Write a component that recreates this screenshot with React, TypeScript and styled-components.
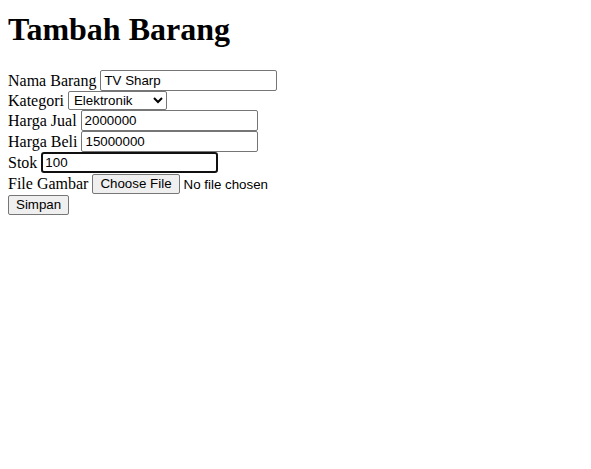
import { createGlobalStyle } from "styled-components";
import styled from "styled-components";

// ---------------------------------------------------------------------

export default function App() {
  return (
    <>
      <GlobalStyle />
      <Title>Tambah Barang</Title>
      <Form onSubmit={(e) => e.preventDefault()}>
        <Row>
          <Label htmlFor="nama">Nama Barang</Label>
          <TextInput id="nama" type="text" defaultValue="TV Sharp" />
        </Row>
        <Row $short>
          <Label htmlFor="kategori">Kategori</Label>
          <Select id="kategori" defaultValue="Elektronik">
            <option>Elektronik</option>
            <option>Pakaian</option>
            <option>Makanan</option>
          </Select>
        </Row>
        <Row>
          <Label htmlFor="jual">Harga Jual</Label>
          <TextInput id="jual" type="text" defaultValue="2000000" />
        </Row>
        <Row>
          <Label htmlFor="beli">Harga Beli</Label>
          <TextInput id="beli" type="text" defaultValue="15000000" />
        </Row>
        <Row>
          <Label htmlFor="stok">Stok</Label>
          <TextInput id="stok" type="text" defaultValue="100" $focused />
        </Row>
        <Row>
          <Label htmlFor="gambar">File Gambar</Label>
          <FileInput id="gambar" type="file" />
        </Row>
        <Row>
          <Button type="submit">Simpan</Button>
        </Row>
      </Form>
    </>
  );
}

//style
const GlobalStyle = createGlobalStyle`
  body {
    margin: 8px;
    background: #ffffff;
    color: #000000;
    font-family: "Liberation Serif", "Times New Roman", serif;
    font-size: 16px;
  }
`;

const Title = styled.h1`
  font-size: 32px;
  font-weight: bold;
  margin: 3px 0 22px;
  line-height: 37px;
`;

const Form = styled.form`
  display: flex;
  flex-direction: column;
`;

const Row = styled.div<{ $short?: boolean }>`
  display: flex;
  align-items: center;
  gap: 4px;
  height: ${(p) => (p.$short ? "19px" : "21px")};
`;

const Label = styled.label`
  font-size: 16px;
  line-height: 18px;
  white-space: nowrap;
`;

const TextInput = styled.input<{ $focused?: boolean }>`
  box-sizing: border-box;
  width: 177px;
  height: 21px;
  font-family: "Liberation Sans", Arial, sans-serif;
  font-size: 13.33px;
  color: #000000;
  background: #ffffff;
  padding: ${(p) => (p.$focused ? "0 2px" : "1px 3px")};
  border: ${(p) => (p.$focused ? "2px solid #101010" : "1px solid #767676")};
  border-radius: ${(p) => (p.$focused ? "3px" : "2px")};
  outline: none;
`;

const Select = styled.select`
  box-sizing: border-box;
  width: 99px;
  height: 19px;
  font-family: "Liberation Sans", Arial, sans-serif;
  font-size: 13.33px;
  color: #000000;
  background: #ffffff;
  border: 1px solid #767676;
  border-radius: 2px;
  padding: 0 0 0 1px;
`;

const FileInput = styled.input`
  font-family: "Liberation Sans", Arial, sans-serif;
  font-size: 13.33px;
  color: #000000;
  &::file-selector-button {
    box-sizing: border-box;
    height: 20px;
    font-family: "Liberation Sans", Arial, sans-serif;
    font-size: 13.33px;
    background: #efefef;
    border: 1px solid #767676;
    border-radius: 2px;
    padding: 1px 7px;
    margin-right: 4px;
    color: #000000;
  }
`;

const Button = styled.button`
  box-sizing: border-box;
  height: 20px;
  font-family: "Liberation Sans", Arial, sans-serif;
  font-size: 13.33px;
  color: #000000;
  background: #efefef;
  border: 1px solid #767676;
  border-radius: 2px;
  padding: 1px 7px;
  cursor: pointer;
`;
